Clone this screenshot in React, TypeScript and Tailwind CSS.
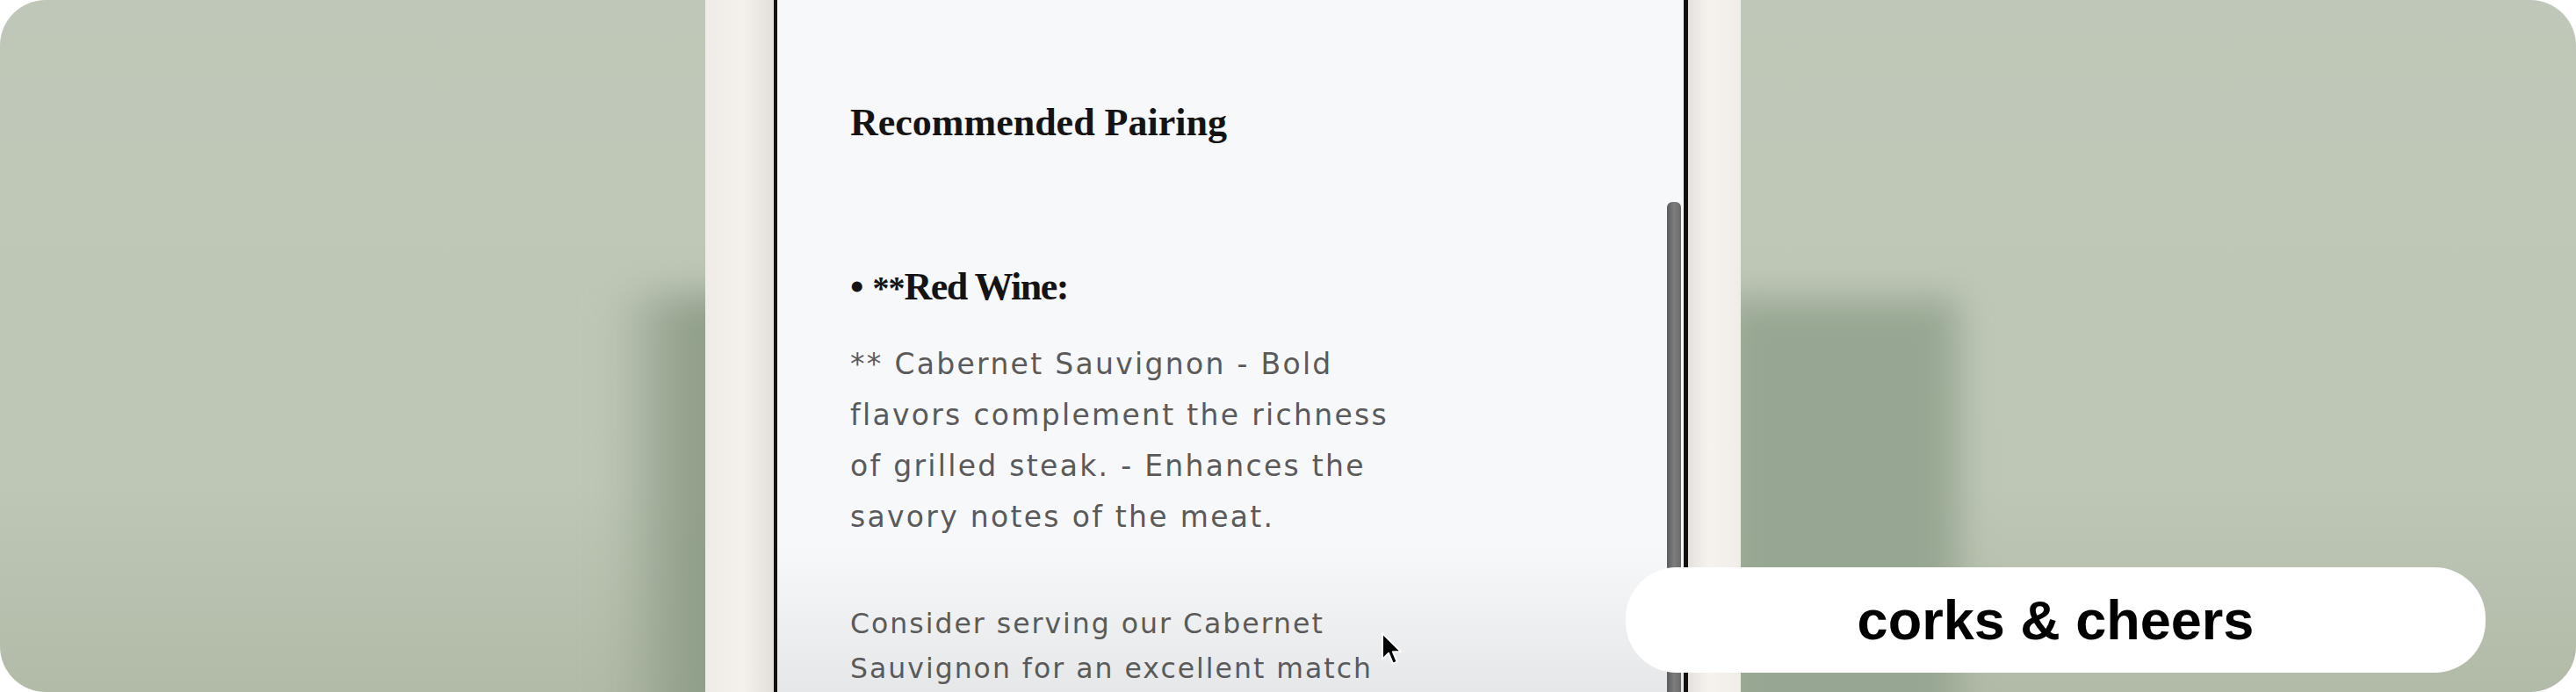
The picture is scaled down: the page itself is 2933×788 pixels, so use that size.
import React from "react";

const serif = { fontFamily: '"Liberation Serif", "DejaVu Serif", serif' } as const;
const body = { fontFamily: '"DejaVu Sans", "Noto Sans", sans-serif' } as const;

function Cursor() {
  return (
    <svg width="26" height="40" viewBox="0 0 19 29" className="block">
      <path
        d="M1.5 1.5 L1.5 23 L6.6 18 L10.2 26.6 L13.6 25.1 L10.1 16.8 L16.8 16.8 Z"
        fill="#000"
        stroke="#fff"
        strokeWidth="1.4"
        strokeLinejoin="round"
      />
    </svg>
  );
}

export default function App() {
  return (
    <div className="w-[2933px] h-[788px] bg-white">
      <div className="relative w-full h-full rounded-[52px] overflow-hidden bg-[linear-gradient(to_bottom,#bfc8b8_0%,#bec7b6_70%,#b2bba8_100%)]">
        {/* blurred shapes behind the phone */}
        <div className="absolute left-[695px] top-[335px] w-[145px] h-[520px] blur-[22px] bg-[linear-gradient(to_right,rgba(140,155,134,0)_0%,#93a18d_55%,#8b9985_100%)]" />
        <div className="absolute left-[1960px] top-[340px] w-[270px] h-[520px] blur-[20px] bg-[#97a692]" />

        <div className="relative z-10 flex h-full pl-[803px]">
          {/* phone */}
          <div className="flex h-full w-[1179px]">
            <div className="w-[78px] h-full bg-[linear-gradient(to_right,#efebe6_0%,#f4f1ed_55%,#e3dfda_100%)]" />
            <div className="w-[4px] h-full bg-[#111]" />
            <div className="flex flex-1 h-full bg-[linear-gradient(to_bottom,#f7f8fa_0%,#f7f8fa_79%,#e6e7e9_100%)]">
              <div className="flex-1 pl-[83px] pt-[118px]">
                <h2
                  style={serif}
                  className="text-[44px] leading-[44px] font-bold text-[#141414] whitespace-nowrap"
                >
                  Recommended Pairing
                </h2>
                <p
                  style={serif}
                  className="mt-[143px] text-[44px] leading-[44px] font-bold text-[#141414] whitespace-nowrap"
                >
                  <span className="mr-[10px]">•</span>
                  <span className="text-[38px] tracking-[-1px]">**</span>
                  <span className="tracking-[-1.5px]">Red Wine:</span>
                </p>
                <p
                  style={body}
                  className="mt-[36px] text-[33px] leading-[58px] font-normal tracking-[2.3px] text-[#5a5a5a] whitespace-nowrap"
                >
                  ** Cabernet Sauvignon - Bold
                  <br />
                  flavors complement the richness
                  <br />
                  of grilled steak. - Enhances the
                  <br />
                  savory notes of the meat.
                </p>
                <p
                  style={body}
                  className="mt-[67px] text-[31.5px] leading-[51px] font-normal tracking-[2px] text-[#5a5a5a] whitespace-nowrap"
                >
                  Consider serving our Cabernet
                  <br />
                  Sauvignon for an excellent match
                </p>
              </div>
              <div className="mt-[230px] mr-[3px] w-[16px] rounded-t-[6px] bg-[linear-gradient(to_right,#5c5c5c,#7d7d7d_50%,#6a6a6a)]" />
            </div>
            <div className="w-[5px] h-full bg-[#111]" />
            <div className="w-[60px] h-full bg-[linear-gradient(to_right,#e5e1dc_0%,#f6f3ef_40%,#f0ece7_100%)]" />
          </div>
        </div>

        {/* mouse cursor */}
        <div className="absolute left-[1572px] top-[719px] z-20">
          <Cursor />
        </div>

        {/* caption pill */}
        <div className="absolute left-[1851px] top-[646px] z-20 flex h-[120px] w-[979px] items-center justify-center rounded-[58px] bg-white">
          <span
            style={{ fontFamily: '"Liberation Sans", Arial, sans-serif' }}
            className="text-[63px] leading-none font-bold text-black"
          >
            corks &amp; cheers
          </span>
        </div>
      </div>
    </div>
  );
}
